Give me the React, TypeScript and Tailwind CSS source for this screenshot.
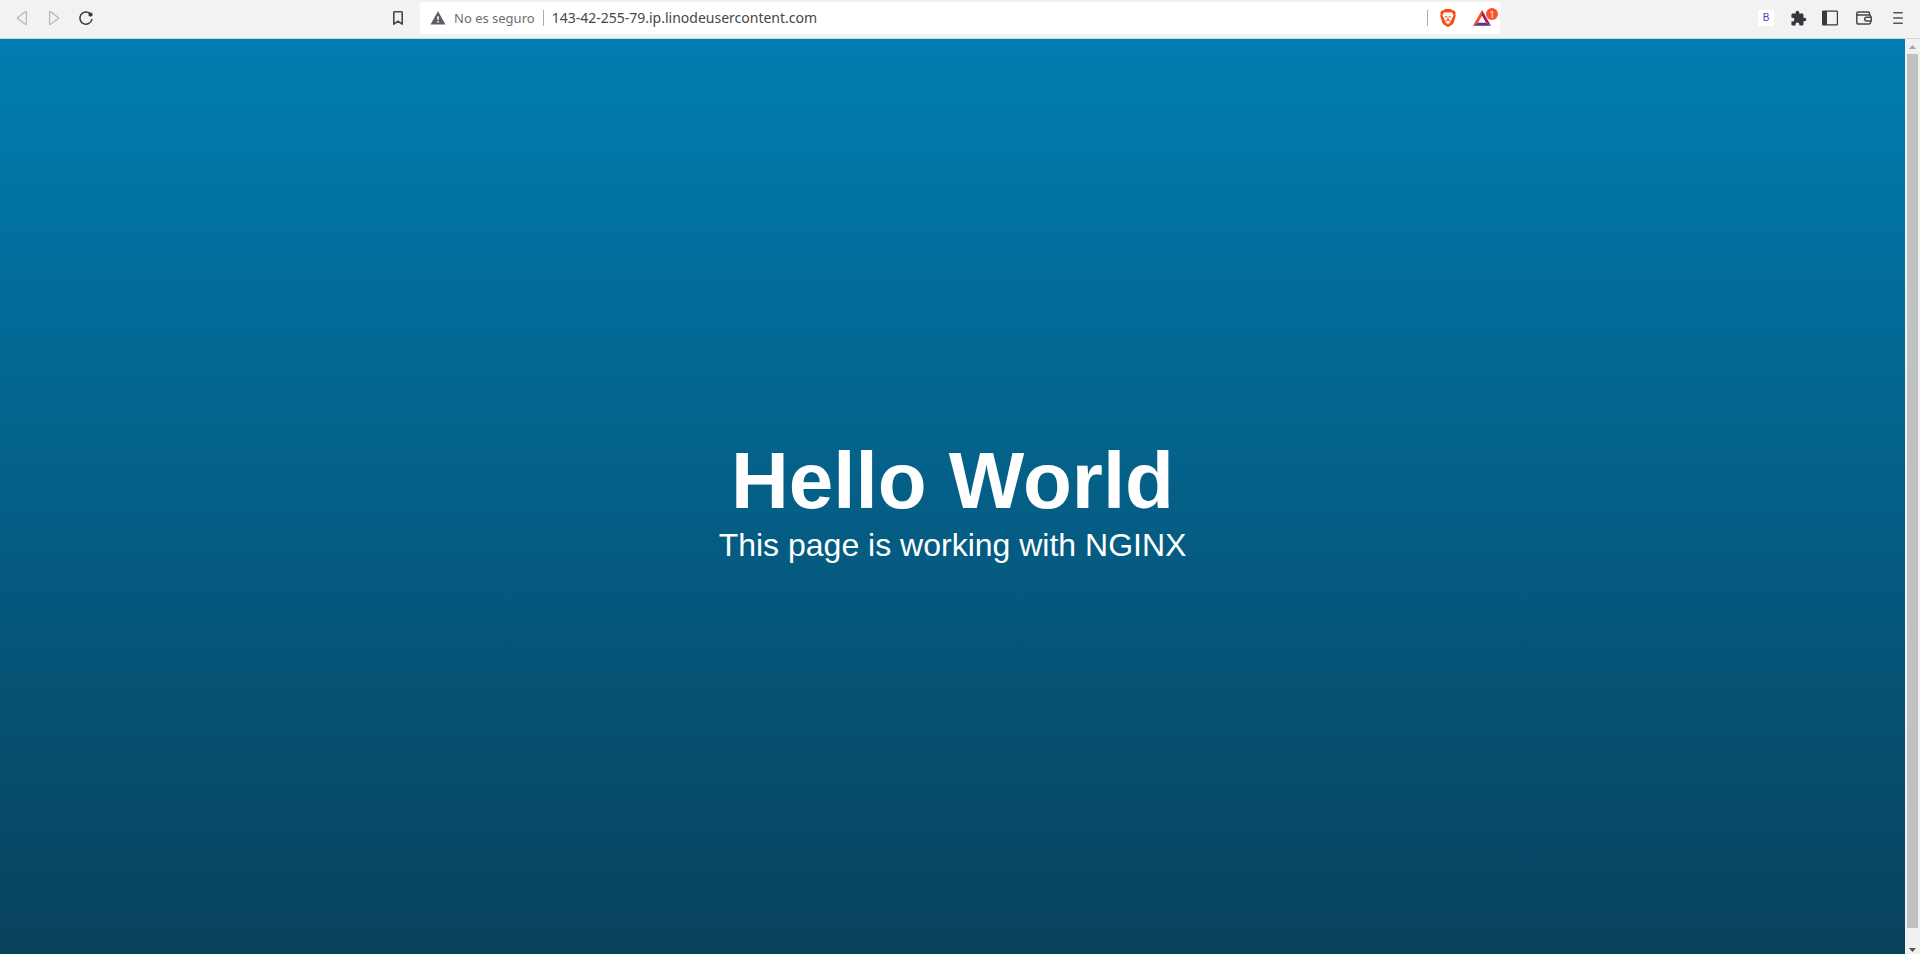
import type { ReactNode } from "react";

function ToolButton({ label, disabled = false, children }: { label: string; disabled?: boolean; children: ReactNode }) {
  return (
    <button
      type="button"
      aria-label={label}
      disabled={disabled}
      className="flex size-8 shrink-0 items-center justify-center rounded text-[#3b3e4f] disabled:text-[#b8b9bd]"
    >
      {children}
    </button>
  );
}

function BackIcon() {
  return (
    <svg width="16" height="16" viewBox="0 0 16 16" fill="none" stroke="currentColor" strokeWidth="1.3" strokeLinejoin="round" aria-hidden="true">
      <path d="M12.4 2.1v11.8c0 .6-.6.8-1 .4L3.7 8.6c-.4-.3-.4-.8 0-1.1l7.7-5.8c.4-.3 1-.1 1 .4z" />
    </svg>
  );
}

function ForwardIcon() {
  return (
    <svg width="16" height="16" viewBox="0 0 16 16" fill="none" stroke="currentColor" strokeWidth="1.3" strokeLinejoin="round" aria-hidden="true">
      <path d="M3.6 2.1v11.8c0 .6.6.8 1 .4l7.7-5.7c.4-.3.4-.8 0-1.1L4.6 1.7c-.4-.3-1-.1-1 .4z" />
    </svg>
  );
}

function ReloadIcon() {
  return (
    <svg width="16" height="16" viewBox="0 0 16 16" fill="none" aria-hidden="true">
      <path d="M12.2 3.6A6.1 6.1 0 1 0 13.9 9.6" stroke="#35383c" strokeWidth="1.5" strokeLinecap="round" />
      <circle cx="12.5" cy="4.6" r="2.1" fill="#35383c" />
    </svg>
  );
}

function BookmarkIcon() {
  return (
    <svg width="16" height="16" viewBox="0 0 16 16" fill="none" stroke="#45474f" strokeWidth="1.6" strokeLinejoin="round" aria-hidden="true">
      <path d="M3.8 2.4c0-.4.3-.7.7-.7h7c.4 0 .7.3.7.7v11.8L8 11.2l-4.2 3z" />
    </svg>
  );
}

function WarningIcon() {
  return (
    <svg width="16" height="16" viewBox="0 0 16 16" aria-hidden="true">
      <path d="M8 1.2 15.5 14.4H.5z" fill="#5a5d63" />
      <path d="M7.2 6.2h1.6v3.6H7.2zM7.2 11h1.6v1.6H7.2z" fill="#fff" />
    </svg>
  );
}

function LionIcon() {
  return (
    <svg width="16" height="18" viewBox="0 0 16 18" aria-hidden="true">
      <path d="M5 0h6l1.4 1.5 1.5-.2L15.7 3.4l-.5 1.3.6 1.7-2 7c-.3 1-.9 1.7-1.7 2.3L8.600 17.800c-.4.2-.8.2-1.200 0L3.900 15.700c-.8-.6-1.400-1.300-1.700-2.300l-2-7 .6-1.700L.3 3.400l1.800-2.100 1.500.2z" fill="#fb4a12" />
      <path d="M4.600 3l1.900.4h3L11.400 3l2.200 2.700-.4 1.700-1.700 2.300.3 1.300-1 1L8.900 10.700l-.4-.7.2-1 1.500-.7.900-.8-.2-.4-1.900.2-.2.900-.5.800h-.6l-.5-.8-.2-.9-1.900-.2-.2.400.9.800 1.500.7.2 1-.4.7L5.200 12l-1-1 .3-1.300-1.700-2.300-.4-1.700z" fill="#fff" />
      <path d="m8 11.400 2.600 1.400-.2.500L8 15.200l-2.400-1.900-.2-.5z" fill="#fff" />
    </svg>
  );
}

function RewardsIcon() {
  return (
    <svg width="18" height="16" viewBox="0 0 18 16" aria-hidden="true">
      <path d="M9 0 0 15.800 5 12.700 9 5.700z" fill="#ff4b1e" />
      <path d="M9 0v5.700l4 7 5 3.100z" fill="#9e1f63" />
      <path d="M0 15.800h18l-5-3.100H5z" fill="#662d91" />
    </svg>
  );
}

function PuzzleIcon() {
  return (
    <svg width="17" height="17" viewBox="0 0 24 24" aria-hidden="true">
      <path d="M20.500 11H19V7c0-1.100-.9-2-2-2h-4V3.500a2.500 2.500 0 0 0-5 0V5H4c-1.100 0-2 .9-2 2v3.800h1.500a2.700 2.700 0 0 1 0 5.400H2V20c0 1.100.9 2 2 2h3.800v-1.500a2.700 2.700 0 0 1 5.400 0V22H17c1.100 0 2-.9 2-2v-4h1.500a2.500 2.500 0 0 0 0-5z" fill="#35383c" />
    </svg>
  );
}

function SidebarIcon() {
  return (
    <svg width="16" height="16" viewBox="0 0 16 16" aria-hidden="true">
      <rect x="0.600" y="1.100" width="14.800" height="13.800" rx="0.600" fill="none" stroke="#35383c" strokeWidth="1.200" />
      <path d="M.6 1.100h4.400v13.800H.6z" fill="#35383c" />
    </svg>
  );
}

function WalletIcon() {
  return (
    <svg width="16" height="16" viewBox="0 0 16 16" fill="none" stroke="#45484d" strokeWidth="1.500" strokeLinejoin="round" aria-hidden="true">
      <path d="M.8 3.500v8.700c0 1 .8 1.800 1.800 1.800h10.600c.8 0 1.400-.6 1.400-1.400V6.400c0-.8-.6-1.400-1.400-1.400H2.400C1.500 5 .8 4.300.8 3.500S1.500 2 2.400 2h9.800c.8 0 1.400.6 1.400 1.400V5" />
      <path d="M15.300 7.200h-4.700a1.900 1.900 0 0 0 0 3.800h4.700z" fill="#f2f2f2" />
    </svg>
  );
}

function MenuIcon() {
  return (
    <svg width="16" height="16" viewBox="0 0 16 16" fill="none" stroke="#55565f" strokeWidth="1.600" strokeLinecap="round" aria-hidden="true">
      <path d="M3.800 2.800h8.400M3.800 8h8.400M3.800 13.200h8.400" />
    </svg>
  );
}

function Toolbar() {
  return (
    <header className="grid shrink-0 grid-cols-[1fr_minmax(0,1080px)_1fr] border-b border-[#d5d6d8] bg-[#f2f2f2] pt-0.5 pb-1">
      <nav aria-label="Navegación" className="flex items-center justify-between px-1.5">
        <div className="flex">
          <ToolButton label="Atrás" disabled><BackIcon /></ToolButton>
          <ToolButton label="Adelante" disabled><ForwardIcon /></ToolButton>
          <ToolButton label="Recargar"><ReloadIcon /></ToolButton>
        </div>
        <ToolButton label="Guardar marcador"><BookmarkIcon /></ToolButton>
      </nav>

      <div className="flex h-8 items-center rounded bg-white pl-2.5 font-['Noto_Sans',sans-serif] text-sm">
        <button type="button" className="flex shrink-0 items-center gap-2 text-[13px] text-[#6b6e73]">
          <WarningIcon />
          No es seguro
        </button>
        <span className="ml-2 h-4 w-px bg-[#a9abae]" />
        <input
          type="text"
          aria-label="Dirección"
          defaultValue="143-42-255-79.ip.linodeusercontent.com"
          className="ml-2 min-w-0 flex-1 bg-transparent text-[#45474b] outline-none"
        />
        <span className="mr-1 h-4 w-px bg-[#a9abae]" />
        <button type="button" aria-label="Brave Shields" className="flex size-8 items-center justify-center">
          <LionIcon />
        </button>
        <button type="button" aria-label="Brave Rewards" className="relative mr-0.5 ml-0.5 flex size-8 items-center justify-center">
          <RewardsIcon />
          <span className="absolute top-1.5 right-0 flex size-3 items-center justify-center rounded-full bg-[#fb542b] text-[9px] leading-none text-white">
            1
          </span>
        </button>
      </div>

      <div className="flex items-center justify-end pr-1.5">
        <ToolButton label="Extensión B">
          <span className="flex size-4 items-center justify-center bg-white font-['Liberation_Sans',sans-serif] text-[10px] leading-none text-[#4a40b8]">
            B
          </span>
        </ToolButton>
        <ToolButton label="Extensiones"><PuzzleIcon /></ToolButton>
        <div className="flex gap-0.5">
          <ToolButton label="Barra lateral"><SidebarIcon /></ToolButton>
          <ToolButton label="Cartera"><WalletIcon /></ToolButton>
          <ToolButton label="Menú"><MenuIcon /></ToolButton>
        </div>
      </div>
    </header>
  );
}

function Scrollbar() {
  return (
    <div aria-hidden="true" className="flex w-[15px] shrink-0 flex-col items-center bg-[#f1f1f1]">
      <div className="flex h-[15px] shrink-0 items-center">
        <svg width="7" height="4" viewBox="0 0 7 4"><path d="M0 4 3.500 0 7 4z" fill="#a3a3a3" /></svg>
      </div>
      <div className="mb-[17px] w-[11px] flex-1 bg-[#c1c1c1]" />
      <div className="flex h-[9px] shrink-0 items-center">
        <svg width="7" height="4" viewBox="0 0 7 4"><path d="M0 0h7L3.500 4z" fill="#505050" /></svg>
      </div>
    </div>
  );
}

export default function App() {
  return (
    <div className="flex min-h-screen flex-col">
      <Toolbar />
      <div className="flex flex-1">
        <main className="flex flex-1 flex-col items-center justify-center bg-[linear-gradient(#007db1,#08415c)] pt-1.5 text-center font-['Liberation_Sans',Arial,sans-serif] text-white">
          <h1 className="text-[80px] leading-[92px] font-bold">Hello World</h1>
          <p className="text-[32px] leading-[37px]">This page is working with NGINX</p>
        </main>
        <Scrollbar />
      </div>
    </div>
  );
}
